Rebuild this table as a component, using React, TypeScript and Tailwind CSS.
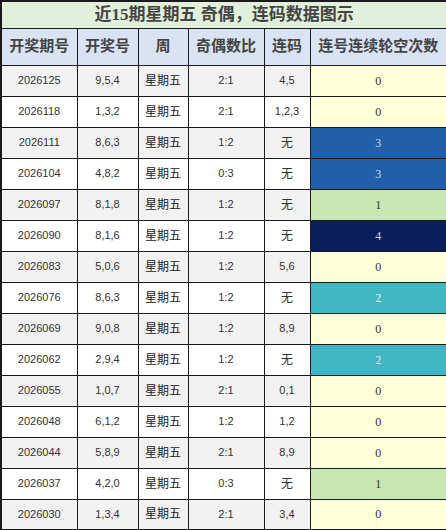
const rows: [string, string, string, string, number][] = [
  ["2026125", "9,5,4", "2:1", "4,5", 0],
  ["2026118", "1,3,2", "2:1", "1,2,3", 0],
  ["2026111", "8,6,3", "1:2", "无", 3],
  ["2026104", "4,8,2", "0:3", "无", 3],
  ["2026097", "8,1,8", "1:2", "无", 1],
  ["2026090", "8,1,6", "1:2", "无", 4],
  ["2026083", "5,0,6", "1:2", "5,6", 0],
  ["2026076", "8,6,3", "1:2", "无", 2],
  ["2026069", "9,0,8", "1:2", "8,9", 0],
  ["2026062", "2,9,4", "1:2", "无", 2],
  ["2026055", "1,0,7", "2:1", "0,1", 0],
  ["2026048", "6,1,2", "1:2", "1,2", 0],
  ["2026044", "5,8,9", "2:1", "8,9", 0],
  ["2026037", "4,2,0", "0:3", "无", 1],
  ["2026030", "1,3,4", "2:1", "3,4", 0],
];

const heat: Record<number, string> = {
  0: "bg-[#ffffd9] text-[#333]",
  1: "bg-[#c6e7b4] text-[#333]",
  2: "bg-[#41b6c4] text-[#e8f4f6]",
  3: "bg-[#2160a8] text-[#c9d8ea]",
  4: "bg-[#0a1f5a] text-[#c9d0e0]",
};

const cjk = "font-['Liberation_Sans','Noto_Sans_CJK_SC',sans-serif]";
const th = "border border-[#1a1a1a] font-semibold text-[15px] text-[#444]";
const td = "border border-[#1a1a1a] h-[31px] p-0 text-center";

export default function App() {
  return (
    <div className={`w-[446px] h-[530px] bg-white ${cjk}`}>
      <table className="w-[446px] table-fixed border-collapse border-2 border-[#1a1a1a]">
        <colgroup>
          <col className="w-[76px]" />
          <col className="w-[61px]" />
          <col className="w-[50px]" />
          <col className="w-[76px]" />
          <col className="w-[46px]" />
          <col className="w-[137px]" />
        </colgroup>
        <thead>
          <tr>
            <th
              colSpan={6}
              className="border border-[#1a1a1a] h-[27px] p-0 bg-[#e2efda] text-[17px] font-semibold text-[#444] leading-none font-['Liberation_Serif','Noto_Sans_CJK_SC',serif]"
            >
              近15期星期五 奇偶，连码数据图示
            </th>
          </tr>
          <tr className="bg-[#dae3f3] h-[37px]">
            <th className={th}>开奖期号</th>
            <th className={th}>开奖号</th>
            <th className={th}>周</th>
            <th className={th}>奇偶数比</th>
            <th className={th}>连码</th>
            <th className={th}>连号连续轮空次数</th>
          </tr>
        </thead>
        <tbody>
          {rows.map(([issue, nums, ratio, lian, gap], i) => (
            <tr key={issue} className={i % 2 === 0 ? "bg-[#f2f2f2]" : "bg-white"}>
              <td className={`${td} text-[11px] text-[#333]`}>{issue}</td>
              <td className={`${td} text-[11px] text-[#333]`}>{nums}</td>
              <td className={`${td} text-[12px] text-[#222]`}>星期五</td>
              <td className={`${td} text-[11px] text-[#333]`}>{ratio}</td>
              <td className={`${td} ${lian === "无" ? "text-[12px]" : "text-[11px]"} text-[#333]`}>
                {lian}
              </td>
              <td className={`${td} text-[12px] font-['Liberation_Serif',serif] ${heat[gap]}`}>
                {gap}
              </td>
            </tr>
          ))}
        </tbody>
      </table>
    </div>
  );
}
